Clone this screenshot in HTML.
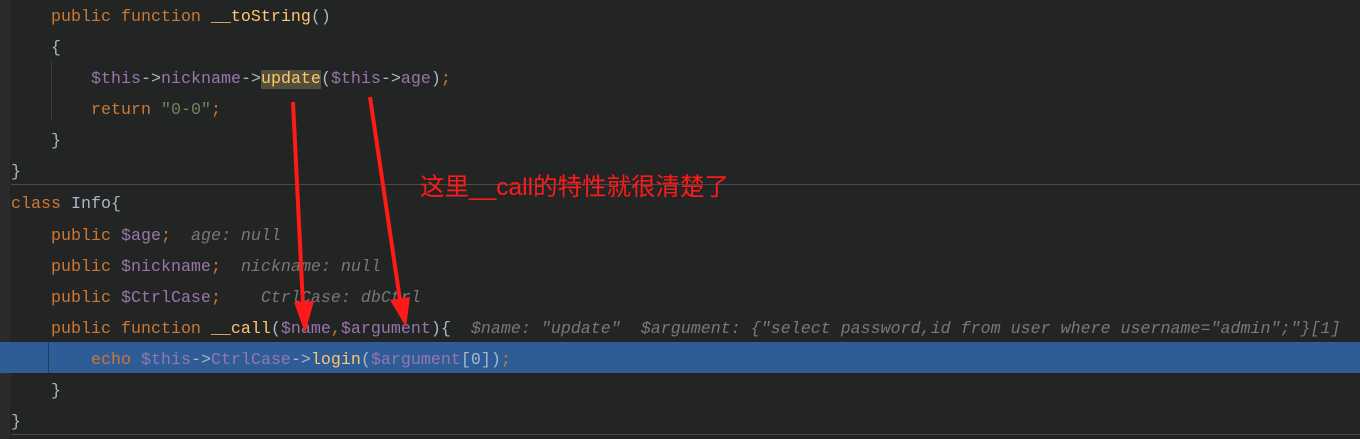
<!DOCTYPE html>
<html><head><meta charset="utf-8"><style>
body{margin:0;width:1360px;height:439px;background:#232525;overflow:hidden;position:relative;font-family:"Liberation Mono",monospace;font-size:16.67px}
.l{position:absolute;height:31px;line-height:31px;white-space:pre;color:#a9b7c6}
.k{color:#cc7832}.v{color:#9876aa}.f{color:#ffc66d}.s{color:#6a8759}.h{color:#787878;font-style:italic}
.gut{position:absolute;left:0;top:0;width:10px;height:439px;background:#2b2b2b}
.sep{position:absolute;left:11px;right:0;height:1px;background:#4a4a4a}
</style></head><body>
<div class="gut"></div>
<div class="sep" style="top:184px"></div>
<div class="sep" style="top:434px"></div>
<div style="position:absolute;left:0;top:342px;width:1360px;height:31px;background:#2d5c96"></div>
<div style="position:absolute;left:51px;top:60px;width:1px;height:60px;background:#3a3a3a"></div>
<div style="position:absolute;left:48px;top:342px;width:1px;height:31px;background:#1c3c60"></div>
<div class="l" style="left:51px;top:2px"><span class="k">public function </span><span class="f">__toString</span>()</div>
<div class="l" style="left:51px;top:33px">{</div>
<div class="l" style="left:91px;top:64px"><span class="v">$this</span>-&gt;<span class="v">nickname</span>-&gt;<span style="background:#52503a;color:#ffc66d">update</span>(<span class="v">$this</span>-&gt;<span class="v">age</span>)<span class="k">;</span></div>
<div class="l" style="left:91px;top:95px"><span class="k">return </span><span class="s">"0-0"</span><span class="k">;</span></div>
<div class="l" style="left:51px;top:126px">}</div>
<div class="l" style="left:11px;top:157px">}</div>
<div class="l" style="left:11px;top:189px"><span class="k">class </span>Info{</div>
<div class="l" style="left:51px;top:221px"><span class="k">public </span><span class="v">$age</span><span class="k">;</span>  <span class="h">age: null</span></div>
<div class="l" style="left:51px;top:252px"><span class="k">public </span><span class="v">$nickname</span><span class="k">;</span>  <span class="h">nickname: null</span></div>
<div class="l" style="left:51px;top:283px"><span class="k">public </span><span class="v">$CtrlCase</span><span class="k">;</span>    <span class="h">CtrlCase: dbCtrl</span></div>
<div class="l" style="left:51px;top:314px"><span class="k">public function </span><span class="f">__call</span>(<span class="v">$name</span><span class="k">,</span><span class="v">$argument</span>){  <span class="h">$name: "update"  $argument: {"select password,id from user where username="admin";"}[1]</span></div>
<div class="l" style="left:91px;top:345px"><span class="k">echo </span><span class="v">$this</span>-&gt;<span class="v">CtrlCase</span>-&gt;<span class="f">login</span>(<span class="v">$argument</span>[0])<span class="k">;</span></div>
<div class="l" style="left:51px;top:376px">}</div>
<div class="l" style="left:11px;top:407px">}</div>
<div style="position:absolute;left:420px;top:168px;font-family:'Liberation Sans','Noto Sans CJK SC',sans-serif;font-size:24.5px;color:#ff1a1a;white-space:pre">这里__call的特性就很清楚了</div>
<svg style="position:absolute;left:0;top:0" width="1360" height="439">
<g stroke="#ff1a1a" stroke-width="4" fill="#ff1a1a">
<line x1="293" y1="102" x2="303" y2="305"/>
<polygon points="294,302 314,301 305,333" stroke="none"/>
<line x1="370" y1="97" x2="400" y2="300"/>
<polygon points="390,300 410,297 406,327" stroke="none"/>
</g></svg>
</body></html>
